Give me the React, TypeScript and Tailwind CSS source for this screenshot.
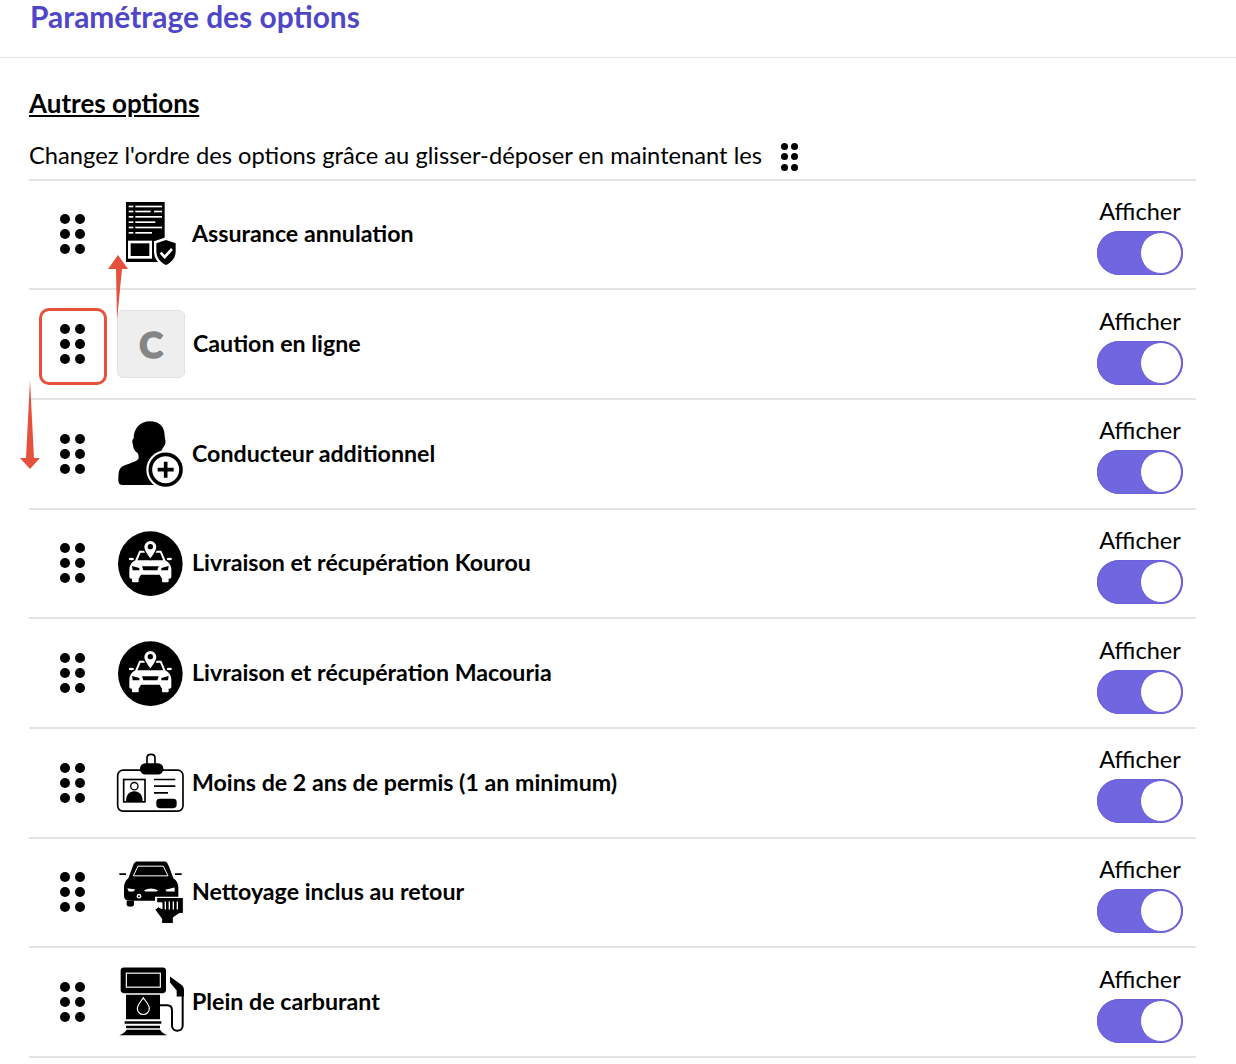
const options = [
  { name: 'Assurance annulation', icon: 'policy' },
  { name: 'Caution en ligne', icon: 'letter' },
  { name: 'Conducteur additionnel', icon: 'driver' },
  { name: 'Livraison et récupération Kourou', icon: 'delivery' },
  { name: 'Livraison et récupération Macouria', icon: 'delivery' },
  { name: 'Moins de 2 ans de permis (1 an minimum)', icon: 'license' },
  { name: 'Nettoyage inclus au retour', icon: 'wash' },
  { name: 'Plein de carburant', icon: 'fuel' },
];

// Six dots, same handle is used in the help line and in the rows
function DragHandle({ small = false }: { small?: boolean }) {
  return (
    <div className={small ? 'mt-[4px] grid grid-cols-2 gap-x-[3px] gap-y-[3.5px]' : 'grid grid-cols-2 gap-[5px]'}>
      {[0, 1, 2, 3, 4, 5].map((i) => (
        <span key={i} className={small ? 'h-[7px] w-[7px] rounded-full bg-black' : 'h-[10px] w-[10px] rounded-full bg-black'} />
      ))}
    </div>
  );
}

function Toggle() {
  return (
    <div className="flex h-[44px] w-[86px] items-center justify-end rounded-full bg-[#7066e0] pr-[1px] shadow-[inset_0_0_0_1px_#6a60d8]">
      <span className="h-[42px] w-[42px] rounded-full border border-[#6a60d8] bg-white" />
    </div>
  );
}

// All drawings use the same 3x grid, 201 units for 67px
function OptionIcon({ icon }: { icon: string }) {
  if (icon === 'letter') {
    return (
      <div className="flex h-[68px] w-[68px] items-center justify-center rounded-[6px] border border-[#e1e3e8] bg-[#eeeeee]">
        <span className="text-[36px] font-black leading-none text-[#858585] [-webkit-text-stroke:1.5px_#858585]">C</span>
      </div>
    );
  }
  return (
    <svg viewBox="0 0 201 201" className="h-[67px] w-[67px] overflow-visible">
      {icon === 'policy' && (
        <g transform="translate(-351,-603)">
          <rect x="378" y="606" width="116" height="180" fill="#000" />
          <g fill="#fff">
            <rect x="386" y="617" width="14" height="5" /><rect x="406" y="617" width="80" height="5" />
            <rect x="386" y="632" width="14" height="5" /><rect x="406" y="632" width="46" height="5" /><rect x="462" y="632" width="24" height="5" />
            <rect x="386" y="648" width="14" height="5" /><rect x="406" y="648" width="80" height="5" />
            <rect x="386" y="664" width="14" height="5" /><rect x="406" y="664" width="60" height="5" />
            <rect x="386" y="680" width="14" height="5" /><rect x="406" y="680" width="80" height="5" />
            <rect x="386" y="696" width="14" height="5" /><rect x="406" y="696" width="50" height="5" />
            <rect x="384" y="722" width="72" height="54" />
          </g>
          <rect x="392" y="730" width="56" height="38" fill="#000" />
          <path d="M498 712l36 12v30c0 24-18 42-36 50-18-8-36-26-36-50v-30z" fill="#fff" />
          <path d="M498 720l29 10v24c0 20-14 34-29 41-15-7-29-21-29-41v-24z" fill="#000" />
          <path d="M482 758l12 13 22-24" fill="none" stroke="#fff" strokeWidth="8" />
        </g>
      )}
      {icon === 'driver' && (
        <g transform="translate(-351,-421)">
          <path d="M450 425c28 0 44 16 44 42 0 10 4 16 2 24-2 10-10 14-12 26l-2 8c-22 6-30 30-24 55 3 12 9 24 15 36H366c-8 0-11-6-11-14 0-26 2-38 16-44 14-6 38-12 44-20 2-4 1-12-2-18-8-4-14-14-14-24-3-8-3-16 2-20 0-30 20-51 49-51z" fill="#000" />
          <circle cx="497" cy="570" r="58" fill="#fff" />
          <circle cx="497" cy="570" r="46" fill="none" stroke="#000" strokeWidth="11" />
          <path d="M497 546v48M473 570h48" stroke="#000" strokeWidth="11" />
        </g>
      )}
      {icon === 'delivery' && (
        <g transform="translate(-15,-9)">
          <circle cx="115" cy="110" r="97" fill="#000" />
          <path d="M72 102L84 74H146L158 102" fill="none" stroke="#fff" strokeWidth="6" />
          <path d="M70 100H160Q178 110 178 128V150Q178 155 172 155H150L143 143H87L80 155H58Q52 155 52 150V128Q52 110 70 100Z" fill="#fff" />
          <ellipse cx="58" cy="96" rx="8" ry="4" fill="#fff" />
          <ellipse cx="172" cy="96" rx="8" ry="4" fill="#fff" />
          <rect x="60" y="153" width="20" height="13" rx="3" fill="#fff" />
          <rect x="150" y="153" width="20" height="13" rx="3" fill="#fff" />
          <path d="M60 117L82 123V130H62ZM170 117L148 123V130H168ZM90 118H140L136 130H94Z" fill="#000" />
          <path d="M115 98C104 82 95 72 95 60a20 20 0 0 1 40 0c0 12-9 22-20 38z" fill="#fff" stroke="#000" strokeWidth="4" />
          <circle cx="115" cy="59" r="8" fill="#000" />
        </g>
      )}
      {icon === 'license' && (
        <g transform="translate(-51,-13.5)">
          <rect x="53" y="77" width="196" height="123" rx="16" fill="#fff" stroke="#000" strokeWidth="5" />
          <path d="M141 62V40c0-14 24-14 24 0v22" fill="none" stroke="#000" strokeWidth="5" />
          <rect x="120" y="56" width="70" height="34" rx="16" fill="#000" />
          <rect x="71" y="105" width="64" height="67" fill="#fff" stroke="#000" strokeWidth="5" />
          <circle cx="103" cy="125" r="11" fill="none" stroke="#000" strokeWidth="4" />
          <path d="M78 170c0-20 10-30 25-30s25 10 25 30z" fill="#000" />
          <path d="M162 105h64M162 125h64M162 145h42" stroke="#000" strokeWidth="5" />
          <rect x="169" y="163" width="61" height="28" rx="10" fill="#000" />
        </g>
      )}
      {icon === 'wash' && (
        <g transform="translate(-21,-4.5)">
          <path d="M28 50H48M195 50H215" stroke="#000" strokeWidth="5" />
          <path d="M80 12H165Q172 12 178 30L190 62Q205 72 205 90V118H135V130H60Q42 130 42 115V90Q42 72 55 62L67 30Q72 12 80 12Z" fill="#000" />
          <path d="M84 26H160L174 55H70Z" fill="#000" stroke="#fff" strokeWidth="3" />
          <path d="M52 92L76 96L70 102H56ZM102 98Q122 88 144 98L140 102H106ZM194 90V102H170L166 97Z" fill="#fff" />
          <circle cx="87" cy="116" r="7" fill="#fff" />
          <circle cx="87" cy="116" r="3" fill="#000" />
          <path d="M50 130H72V142C72 150 50 150 50 142Z" fill="#000" />
          <path d="M140 120H220V168H208L190 180V198H155V184L134 156L146 148L156 154V136H140Z" fill="#000" stroke="#fff" strokeWidth="3" />
          <path d="M166 132V156M178 132V156M190 132V156M202 132V156" stroke="#fff" strokeWidth="4" />
        </g>
      )}
      {icon === 'fuel' && (
        <g transform="translate(-21,-19.5)">
          <rect x="32" y="15" width="136" height="77" rx="10" fill="#000" />
          <rect x="49" y="32" width="102" height="42" fill="none" stroke="#fff" strokeWidth="3.5" />
          <path d="M48 97H150V170H48ZM44 176H154V184H44ZM48 190H150V197H48ZM28 218C40 214 46 208 50 202H150C154 208 160 214 172 218Z" fill="#000" />
          <path d="M100 106C110 120 118 128 118 138a18 18 0 0 1-36 0c0-10 8-18 18-32z" fill="none" stroke="#fff" strokeWidth="3.5" />
          <path d="M150 128H172C182 128 186 134 186 144V190C186 210 218 210 218 190V100" fill="none" stroke="#000" strokeWidth="6" />
          <path d="M180 42L212 65C220 70 222 76 222 84V102H200V84L180 60Z" fill="#000" />
        </g>
      )}
    </svg>
  );
}

export default function App() {
  return (
    <div className="relative h-[1064px] w-[1236px] overflow-hidden bg-white font-['Lato',sans-serif] text-black">
      <header className="flex h-[58px] items-start border-b border-[#e2e2e8] pl-[30px]">
        <h1 className="text-[29.9px] font-bold leading-[32px] text-[#4f46c8]">Paramétrage des options</h1>
      </header>

      <div className="px-[29px] pr-[40px]">
        <h2 className="mt-[28px] text-[26px] font-bold leading-[34px] underline">Autres options</h2>
        <div className="mt-[18px] flex h-[33px] items-center gap-[19px] text-[23.7px] leading-[30px]">
          <span>Changez l'ordre des options grâce au glisser-déposer en maintenant les</span>
          <DragHandle small />
        </div>

        <ul className="mt-[7.5px] border-t-2 border-[#e4e4e4]">
          {options.map((option) => (
            <li key={option.name} className="flex h-[109.7px] items-center border-b-2 border-[#e4e4e4]">
              <div className="mr-[1px] flex w-[87px] justify-center">
                <DragHandle />
              </div>
              <OptionIcon icon={option.icon} />
              <span className="ml-[8px] -mt-[2px] flex-1 text-[23.2px] font-bold leading-[30px]">{option.name}</span>
              <div className="mr-[13px] flex w-[86px] flex-col items-center gap-[5px] pt-[2px]">
                <span className="text-[23.5px] leading-[30px]">Afficher</span>
                <Toggle />
              </div>
            </li>
          ))}
        </ul>
      </div>

      {/* annotations on top of the list */}
      <div className="absolute left-[39px] top-[308px] h-[77px] w-[68px] rounded-[10px] border-[3px] border-[#e5513c]" />
      <svg className="absolute left-[105px] top-[250px] h-[72px] w-[28px]" viewBox="0 0 28 72">
        <path d="M13 5l10 14h-6l-5 51-1-51H3z" fill="#e5513c" />
      </svg>
      <svg className="absolute left-[18px] top-[378px] h-[94px] w-[24px]" viewBox="0 0 24 94">
        <path d="M12 2l4 78h6L12 91 2 80h6z" fill="#e5513c" />
      </svg>
    </div>
  );
}
